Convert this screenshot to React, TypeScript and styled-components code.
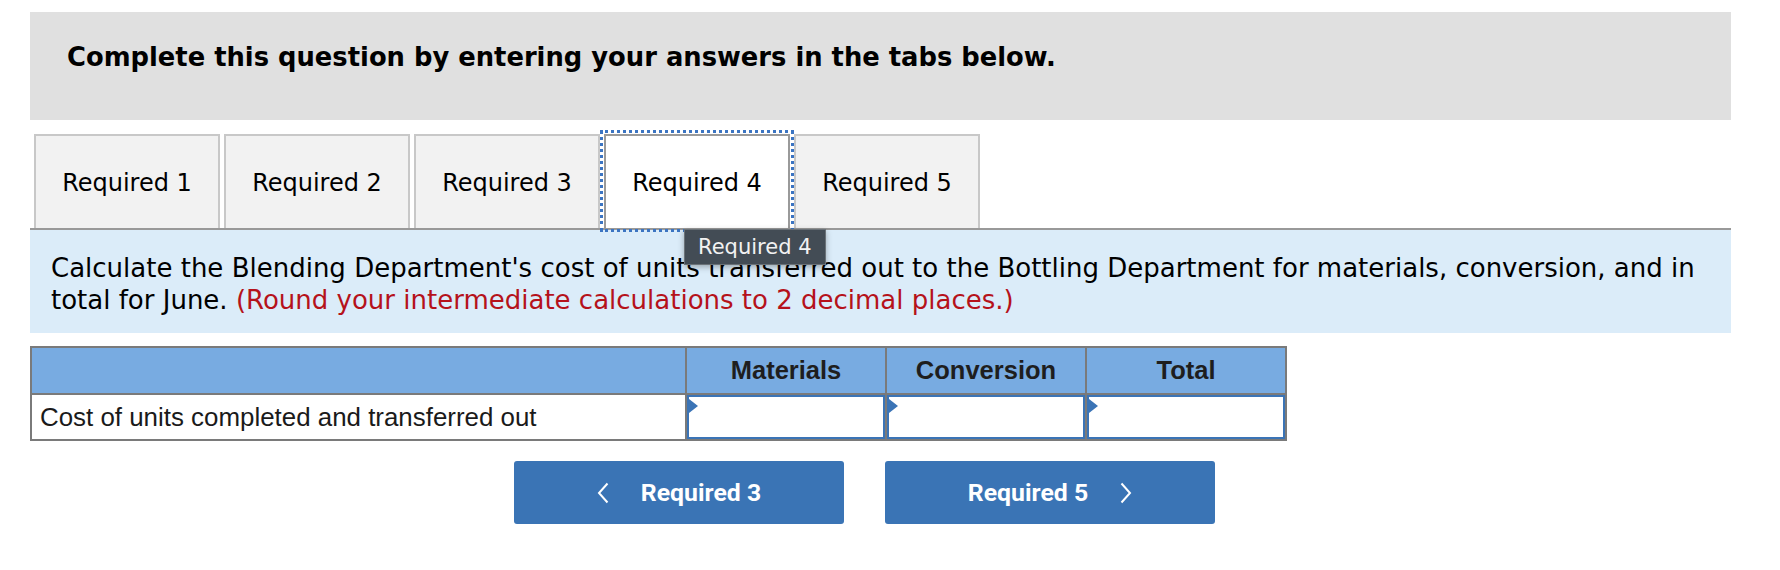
import React from 'react';
import styled, { createGlobalStyle } from 'styled-components';

const GlobalStyle = createGlobalStyle`
  body {
    margin: 0;
    background: #ffffff;
  }
`;

const tabs = ['Required 1', 'Required 2', 'Required 3', 'Required 4', 'Required 5'];
const columns = ['Materials', 'Conversion', 'Total'];

function App() {
  const activeTab = 3;

  return (
    <>
      <GlobalStyle />
      <Page>
        <Banner>Complete this question by entering your answers in the tabs below.</Banner>

        <TabBar>
          {tabs.map((label, index) => (
            <Tab key={label} $active={index === activeTab}>
              {label}
              {index === activeTab && <Tooltip>{label}</Tooltip>}
            </Tab>
          ))}
        </TabBar>

        <InfoPanel>
          Calculate the Blending Department's cost of units transferred out to the Bottling Department for materials, conversion, and in total for June.{' '}
          <Hint>(Round your intermediate calculations to 2 decimal places.)</Hint>
        </InfoPanel>

        <Table>
          <thead>
            <tr>
              <HeadCell />
              {columns.map((col) => (
                <HeadCell key={col}>{col}</HeadCell>
              ))}
            </tr>
          </thead>
          <tbody>
            <tr>
              <LabelCell>Cost of units completed and transferred out</LabelCell>
              {columns.map((col) => (
                <InputCell key={col}>
                  <AnswerBox>
                    <Marker />
                  </AnswerBox>
                </InputCell>
              ))}
            </tr>
          </tbody>
        </Table>

        <NavRow>
          <NavButton>
            <Chevron viewBox="0 0 12 22">
              <path d="M10.5 1.5 L2 11 L10.5 20.5" />
            </Chevron>
            <span>Required 3</span>
          </NavButton>
          <NavButton>
            <span>Required 5</span>
            <Chevron viewBox="0 0 12 22">
              <path d="M1.5 1.5 L10 11 L1.5 20.5" />
            </Chevron>
          </NavButton>
        </NavRow>
      </Page>
    </>
  );
}

export default App;

const Page = styled.div`
  width: 1701px;
  padding: 12px 0 0 30px;
`;

const Banner = styled.div`
  height: 108px;
  box-sizing: border-box;
  padding: 30px 37px 0;
  background-color: #e0e0e0;
  font-family: 'DejaVu Sans', Verdana, sans-serif;
  font-weight: bold;
  font-size: 25.8px;
  line-height: 30px;
  color: #000;
`;

const TabBar = styled.div`
  display: flex;
  gap: 4px;
  margin-top: 14px;
  padding-left: 4px;
  border-bottom: 2px solid #999999;
`;

const Tab = styled.div<{ $active: boolean }>`
  position: relative;
  width: 186px;
  height: 94px;
  box-sizing: border-box;
  display: flex;
  align-items: center;
  justify-content: center;
  padding-top: 2px;
  border: 2px solid ${(p) => (p.$active ? '#9a9a9a' : '#c8c8c8')};
  border-bottom: none;
  background-color: ${(p) => (p.$active ? '#ffffff' : '#f2f2f2')};
  outline: ${(p) => (p.$active ? '3px dotted #3b74c2' : 'none')};
  outline-offset: 1px;
  font-family: 'DejaVu Sans', Verdana, sans-serif;
  font-size: 24px;
  color: #000;
`;

const Tooltip = styled.div`
  position: absolute;
  left: 78px;
  top: 93px;
  z-index: 2;
  padding: 3px 13px 3px;
  background-color: #434c55;
  border: 1px solid #6b7278;
  box-shadow: 0 2px 6px rgba(0, 0, 0, 0.3);
  color: #f2f2f2;
  font-family: 'DejaVu Sans', Verdana, sans-serif;
  font-size: 21px;
  line-height: 28px;
  white-space: nowrap;
`;

const InfoPanel = styled.div`
  padding: 22px 20px 17px 21px;
  background-color: #dbecf9;
  font-family: 'DejaVu Sans', Verdana, sans-serif;
  font-size: 26px;
  line-height: 32px;
  color: #000;
`;

const Hint = styled.span`
  color: #b5121b;
`;

const Table = styled.table`
  margin-top: 13px;
  border-collapse: collapse;
  border: 2px solid #7a7a7a;
  font-family: 'Liberation Sans', Arial, sans-serif;
`;

const HeadCell = styled.th`
  height: 45px;
  padding: 0;
  border: 2px solid #7a7a7a;
  background-color: #78abe1;
  font-size: 25.5px;
  font-weight: bold;
  color: #1e1e1e;
  text-align: center;
  width: 198px;

  &:first-child {
    width: 653px;
  }
`;

const LabelCell = styled.td`
  height: 44px;
  padding: 0 0 0 8px;
  border: 2px solid #7a7a7a;
  font-size: 25.9px;
  color: #1a1a1a;
  text-align: left;
`;

const InputCell = styled.td`
  padding: 0;
  border: 2px solid #7a7a7a;
`;

const AnswerBox = styled.div`
  position: relative;
  height: 44px;
  box-sizing: border-box;
  border: 2px solid #3b74b6;
  background-color: #ffffff;
`;

const Marker = styled.span`
  position: absolute;
  left: 0;
  top: 2px;
  width: 0;
  height: 0;
  border-top: 7px solid transparent;
  border-bottom: 7px solid transparent;
  border-left: 9px solid #3b74b6;
`;

const NavRow = styled.div`
  display: flex;
  gap: 41px;
  margin-top: 20px;
  padding-left: 484px;
`;

const NavButton = styled.button`
  width: 330px;
  height: 63px;
  display: flex;
  align-items: center;
  justify-content: center;
  gap: 32px;
  border: none;
  border-radius: 3px;
  background-color: #3a74b5;
  color: #ffffff;
  font-family: Roboto, 'Liberation Sans', sans-serif;
  font-weight: bold;
  font-size: 24.8px;
  cursor: pointer;
`;

const Chevron = styled.svg`
  width: 12px;
  height: 22px;
  fill: none;
  stroke: #ffffff;
  stroke-width: 2;
`;
